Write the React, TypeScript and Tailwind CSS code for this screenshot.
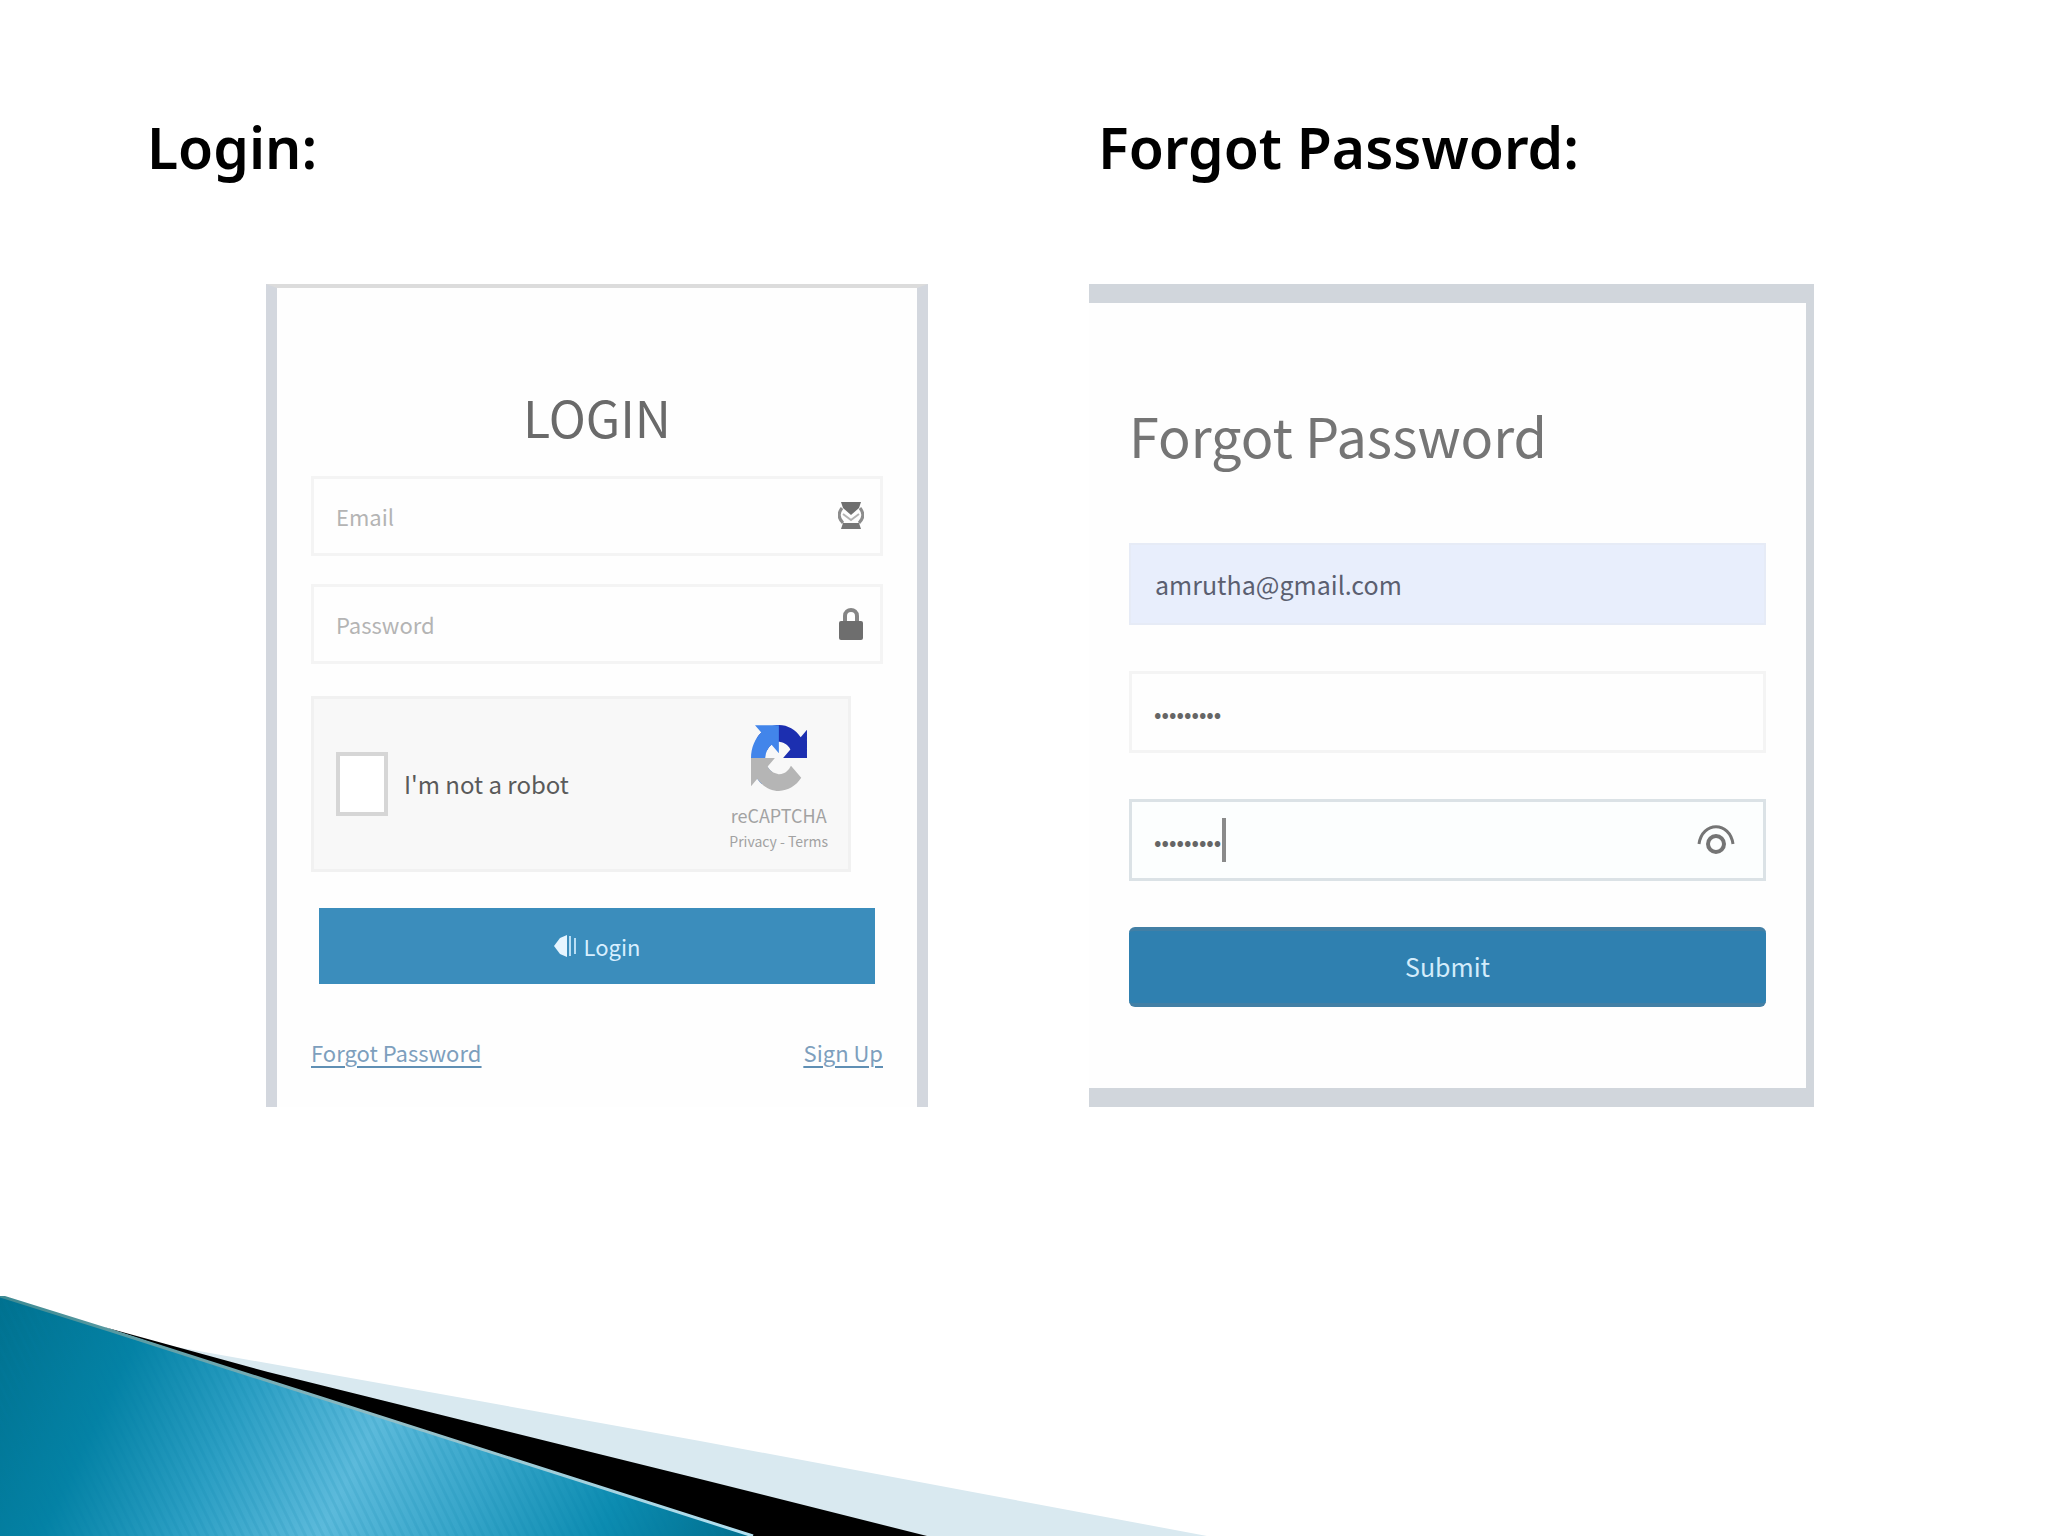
import type { InputHTMLAttributes, ReactNode } from "react";

function MailIcon() {
    return (
        <svg viewBox="0 0 26 30" className="h-[30px] w-[26px]" aria-hidden="true">
            <path d="M3 1h20l-2 6-8 7-8-7z" fill="#6f6f6f" />
            <path
                d="M4 7c-4 5-4 10 1 15M22 7c4 5 4 10-1 15"
                fill="none"
                stroke="#8c8c8c"
                strokeWidth="3"
            />
            <path d="M5 13l8 6 8-6" fill="none" stroke="#b4b4b4" strokeWidth="2" />
            <path d="M5 22h16l2 6H3z" fill="#777" />
        </svg>
    );
}

function LockIcon() {
    return (
        <svg viewBox="0 0 26 34" className="h-[34px] w-[26px]" aria-hidden="true">
            <path
                d="M7 16V9c0-8 12-8 12 0v7"
                fill="none"
                stroke="#858585"
                strokeWidth="4"
            />
            <rect x="1" y="14" width="24" height="19" rx="2" fill="#6e6e6e" />
        </svg>
    );
}

function EyeIcon() {
    return (
        <svg
            viewBox="0 0 38 32"
            className="h-[32px] w-[38px]"
            fill="none"
            stroke="#757575"
            aria-hidden="true"
        >
            <path d="M2 20C5 -3 33 -3 36 20" strokeWidth="3" />
            <circle cx="19" cy="20" r="8" strokeWidth="4" />
        </svg>
    );
}

function SignInIcon() {
    return (
        <svg viewBox="0 0 26 26" className="h-[26px] w-[26px]" aria-hidden="true">
            <path d="M0 13l6-8 7-3v22l-7-3z" fill="#e6f5ff" />
            <path
                d="M16 3v20M21 5v16"
                fill="none"
                stroke="#b9def5"
                strokeWidth="2"
            />
        </svg>
    );
}

function RecaptchaLogo() {
    return (
        <svg
            viewBox="0 0 64 64"
            preserveAspectRatio="none"
            className="h-[66px] w-[56px]"
            aria-hidden="true"
        >
            <path
                fill="#1c2fb0"
                d="M64 31.955l-.033-1.37V4.687l-7.16 7.16C50.948 4.674 42.033.093 32.05.093c-10.4 0-19.622 4.96-25.458 12.64l11.736 11.86a15.55 15.55 0 0 1 4.754-5.334c2.05-1.6 4.952-2.906 8.968-2.906.485 0 .86.057 1.135.163 4.976.393 9.288 3.14 11.828 7.124l-8.307 8.307L64 31.953"
            />
            <path
                fill="#4285ea"
                d="M31.862.094l-1.37.033H4.594l7.16 7.16C4.58 13.147 0 22.06 0 32.046c0 10.4 4.96 19.622 12.64 25.458L24.5 45.768a15.55 15.55 0 0 1-5.334-4.754c-1.6-2.05-2.906-4.952-2.906-8.968 0-.485.057-.86.163-1.135.393-4.976 3.14-9.288 7.124-11.828l8.307 8.307L31.86.095"
            />
            <path
                fill="#b5b5b5"
                d="M.001 32.045l.033 1.37v25.898l7.16-7.16c5.86 7.173 14.774 11.754 24.76 11.754 10.4 0 19.622-4.96 25.458-12.64l-11.736-11.86a15.55 15.55 0 0 1-4.754 5.334c-2.05 1.6-4.952 2.906-8.968 2.906-.485 0-.86-.057-1.135-.163-4.976-.393-9.288-3.14-11.828-7.124l8.307-8.307-31.287.04"
            />
        </svg>
    );
}

function SlideTitle({ children }: { children: ReactNode }) {
    return (
        <h1 className="font-['Noto_Sans',sans-serif] text-[57px] leading-[80px] font-semibold text-black">
            {children}
        </h1>
    );
}

type FieldProps = InputHTMLAttributes<HTMLInputElement> & {
    label: string;
    icon: ReactNode;
};

function IconField({ label, icon, ...rest }: FieldProps) {
    return (
        <div className="flex h-20 items-center border-3 border-[#f4f4f4] pr-4 pl-[22px]">
            <input
                {...rest}
                aria-label={label}
                placeholder={label}
                className="h-12 min-w-0 flex-1 bg-transparent text-[22px] leading-10 text-[#555] outline-none placeholder:text-[#b4b4b4]"
            />
            {icon}
        </div>
    );
}

function LoginCard() {
    return (
        <form className="h-[823px] overflow-hidden border-x-11 border-t-4 border-x-[#d3d7de] border-t-[#dcdcdc] bg-[#fefefe] px-[34px] pt-[68px]">
            <h2 className="text-center text-[50px] leading-[120px] text-[#6a6a6a]">
                LOGIN
            </h2>
            <div className="space-y-7">
                <IconField label="Email" type="email" icon={<MailIcon />} />
                <IconField label="Password" type="password" icon={<LockIcon />} />
            </div>

            <div className="mt-8 mr-8 flex h-44 items-center justify-between border-3 border-[#f1f1f1] bg-[#f8f8f8] pr-5 pl-[22px]">
                <label className="flex items-center gap-4 text-2xl text-[#5a5a5a]">
                    <input
                        type="checkbox"
                        className="h-16 w-[52px] appearance-none border-4 border-[#d6d6d6] bg-white"
                    />
                    I'm not a robot
                </label>
                <div className="flex flex-col items-center pt-3 text-[#a2a2a2]">
                    <RecaptchaLogo />
                    <span className="mt-3 text-lg leading-6">reCAPTCHA</span>
                    <span className="text-sm leading-7">Privacy - Terms</span>
                </div>
            </div>

            <button
                type="button"
                className="mx-2 mt-9 flex h-[76px] w-[calc(100%-16px)] items-center justify-center gap-1 bg-[#3b8dbc] text-[22px] text-[#d8efff]"
            >
                <SignInIcon />
                Login
            </button>

            <div className="mt-12 flex justify-between text-[22px] leading-10 text-[#7d9fbd] underline decoration-[#5f8fb4] decoration-2 underline-offset-4">
                <a href="#forgot">Forgot Password</a>
                <a href="#signup">Sign Up</a>
            </div>
        </form>
    );
}

function ForgotCard() {
    return (
        <form
            id="forgot"
            className="h-[823px] border-y-19 border-r-8 border-[#d1d6dc] bg-[#fefefe] px-10"
        >
            <h2 className="pt-[72px] text-[54px] leading-[120px] text-[#757575]">
                Forgot Password
            </h2>
            <div className="mt-12 flex flex-col gap-[46px] text-[25px]">
                <input
                    type="email"
                    aria-label="Email"
                    defaultValue="amrutha@gmail.com"
                    className="h-[82px] w-full border-2 border-[#e6ebf6] bg-[#e8eefc] px-6 leading-10 text-[#5b5f70] outline-none"
                />
                <input
                    type="password"
                    aria-label="New password"
                    defaultValue="amrutha12"
                    className="h-[82px] w-full border-3 border-[#f4f4f4] bg-transparent px-[22px] text-[22px] text-[#666] outline-none"
                />
                <div className="relative flex h-[82px] items-center border-3 border-[#dbe2e6] bg-[#fcfefe] pr-7 pl-[22px] text-[22px]">
                    <input
                        type="password"
                        aria-label="Confirm password"
                        defaultValue="amrutha12"
                        className="min-w-0 flex-1 bg-transparent text-[#666] outline-none"
                    />
                    {/* text cursor */}
                    <span className="absolute left-[90px] h-11 w-1 bg-[#8a8a8a]"></span>
                    <button type="button" aria-label="Show password">
                        <EyeIcon />
                    </button>
                </div>
                <button
                    type="button"
                    className="h-20 rounded-md border-y-4 border-[#427fa5] bg-[#2f80b0] text-[#d3ecfb]"
                >
                    Submit
                </button>
            </div>
        </form>
    );
}

function Swoosh() {
    return (
        <svg viewBox="0 0 2048 240" className="mt-auto block w-full" aria-hidden="true">
            <defs>
                <linearGradient
                    id="teal"
                    gradientUnits="userSpaceOnUse"
                    x1="0"
                    y1="0"
                    x2="705"
                    y2="345"
                >
                    <stop offset="0" stopColor="#00718f" />
                    <stop offset="0.18" stopColor="#0482a5" />
                    <stop offset="0.34" stopColor="#2c9fc4" />
                    <stop offset="0.5" stopColor="#5cbadb" />
                    <stop offset="0.65" stopColor="#38a6ca" />
                    <stop offset="0.82" stopColor="#0c8cb1" />
                    <stop offset="1" stopColor="#006d8c" />
                </linearGradient>
                <linearGradient id="edge">
                    <stop offset="0" stopColor="#3f8a92" />
                    <stop offset="0.5" stopColor="#8fbcc4" />
                    <stop offset="1" stopColor="#b4e2f2" />
                </linearGradient>
                <pattern
                    id="stripes"
                    width="8"
                    height="8"
                    patternUnits="userSpaceOnUse"
                    patternTransform="rotate(-26)"
                >
                    <rect width="3" height="8" fill="#007ba3" opacity="0.12" />
                </pattern>
            </defs>
            <path d="M165 49L446 99L700 145L1207 240H880L200 62z" fill="#d9e9f0" />
            <path d="M104 31L268 76L700 183L927 240H740z" fill="#000" />
            <path d="M0 0L112 35L753 240H0z" fill="url(#teal)" />
            <path d="M0 0L112 35L753 240H0z" fill="url(#stripes)" />
            <path
                d="M0 0L112 35L753 240"
                fill="none"
                stroke="url(#edge)"
                strokeWidth="3"
            />
        </svg>
    );
}

export default function App() {
    return (
        <main className="flex min-h-screen flex-col bg-white font-['Noto_Sans_CJK_JP',sans-serif]">
            <div className="grid grid-cols-2 pt-[107px]">
                <section>
                    <div className="pl-[147px]">
                        <SlideTitle>Login:</SlideTitle>
                    </div>
                    <div className="mt-[97px] mr-24 ml-[266px]">
                        <LoginCard />
                    </div>
                </section>
                <section>
                    <div className="pl-[74px]">
                        <SlideTitle>Forgot Password:</SlideTitle>
                    </div>
                    <div className="mt-[97px] mr-[234px] ml-[65px]">
                        <ForgotCard />
                    </div>
                </section>
            </div>
            <Swoosh />
        </main>
    );
}
